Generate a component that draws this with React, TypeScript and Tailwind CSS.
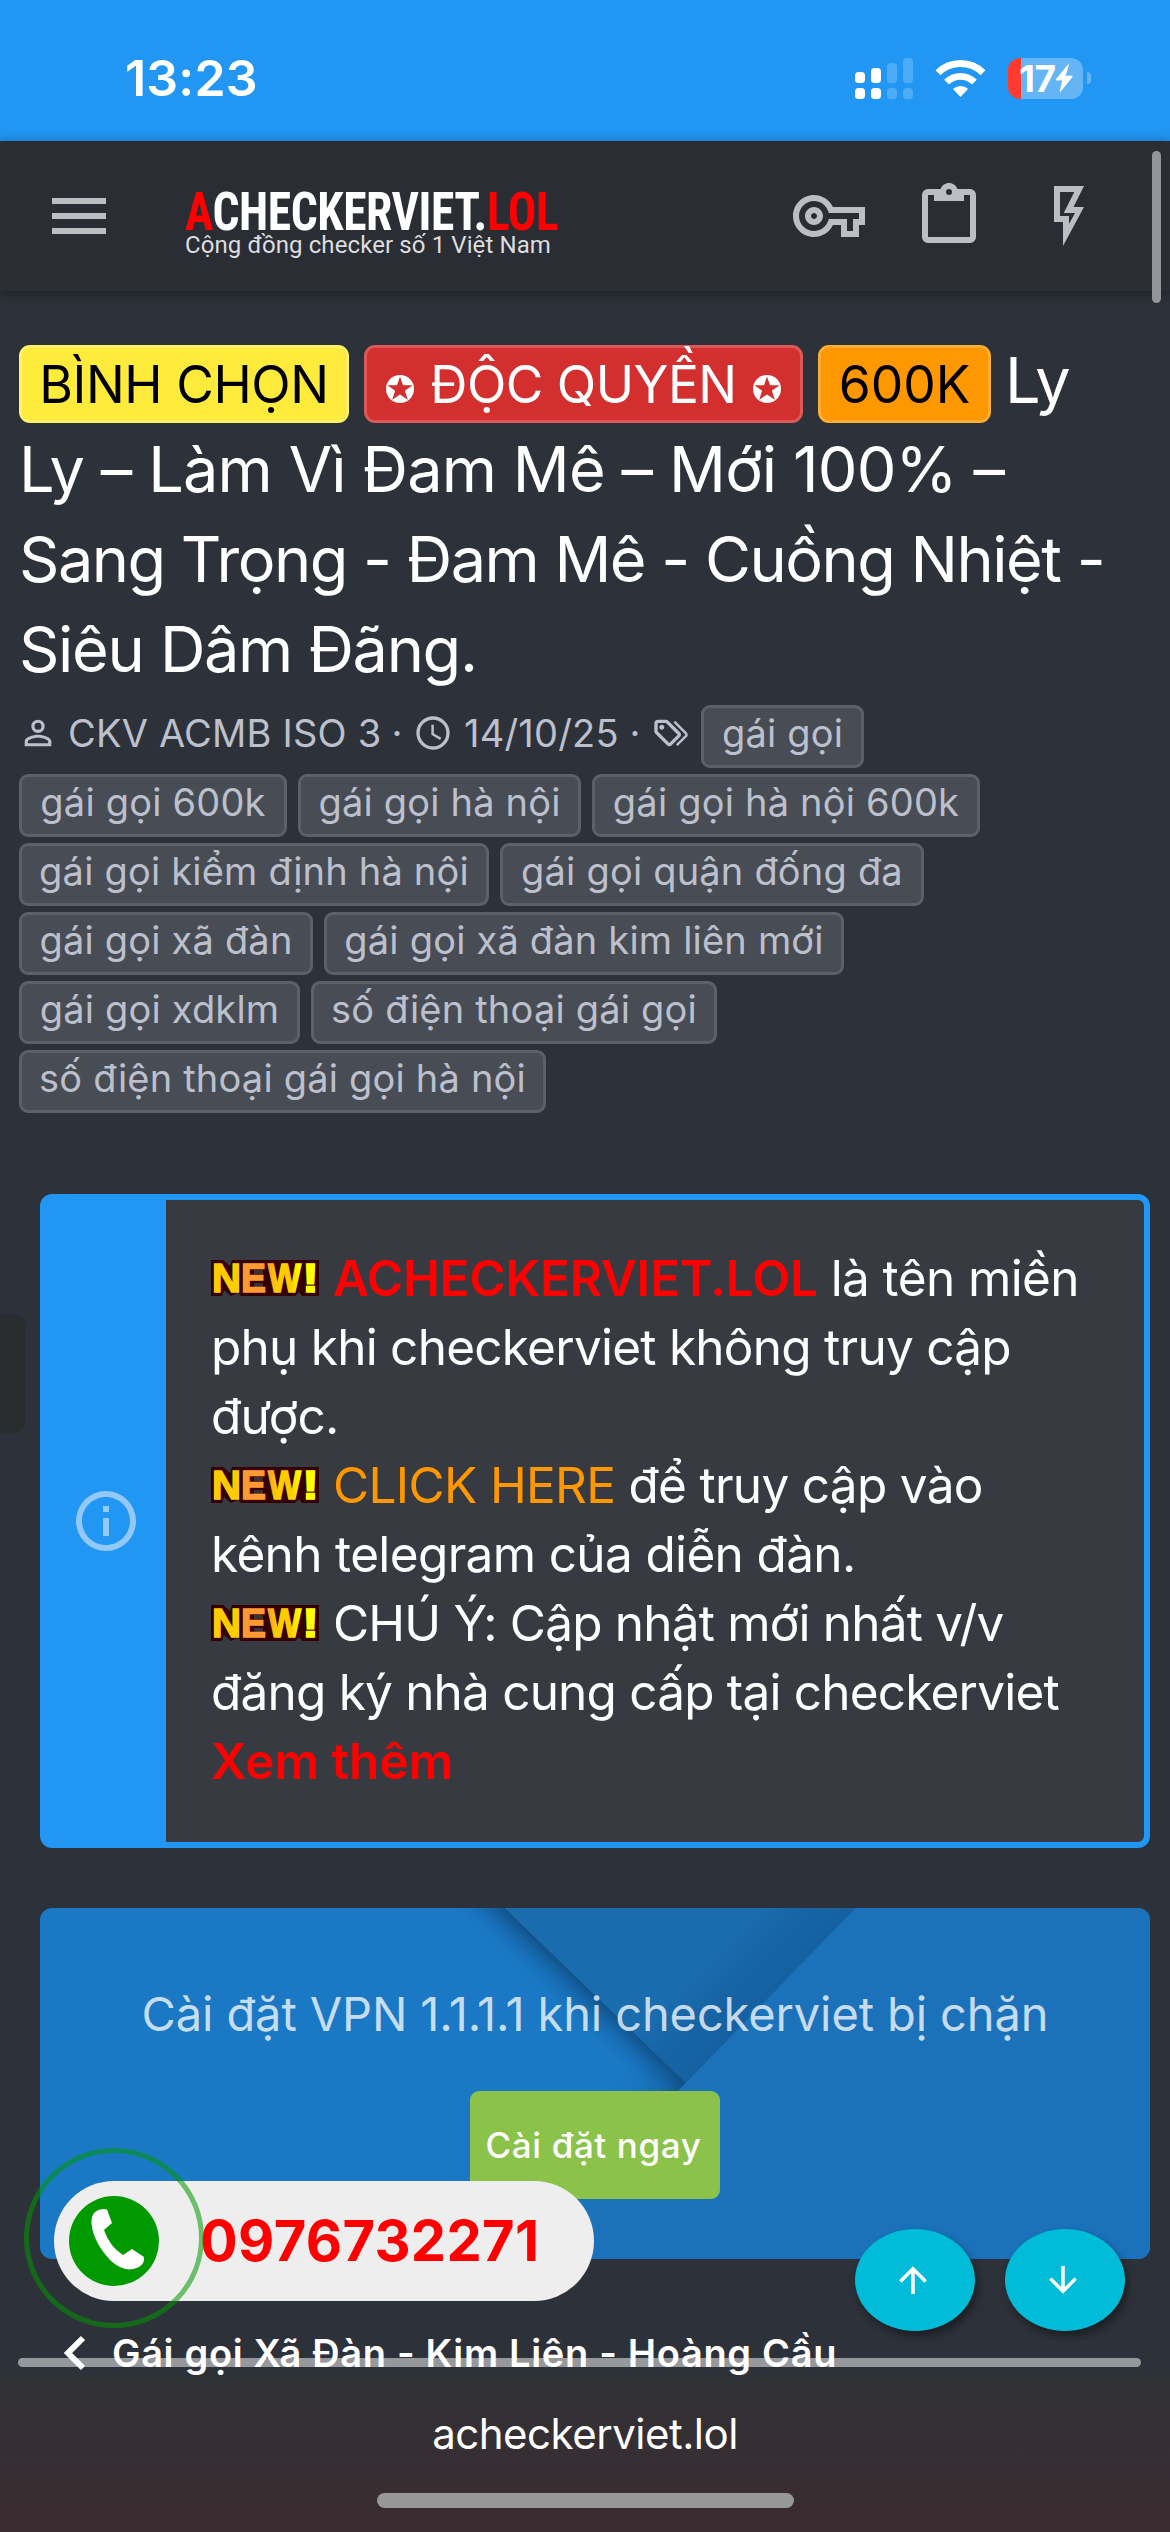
import React from "react";

const Icon = ({ d, className }: { d: string; className: string }) => (
  <svg viewBox="0 0 24 24" fill="currentColor" className={className}>
    <path d={d} />
  </svg>
);

const icons = {
  key: "M22,19H16V15H13.32C12.18,17.42 9.72,19 7,19C3.14,19 0,15.86 0,12C0,8.14 3.14,5 7,5C9.72,5 12.17,6.58 13.32,9H24V15H22V19M18,17H20V13H22V11H11.94L11.71,10.33C11,8.34 9.11,7 7,7C4.24,7 2,9.24 2,12C2,14.76 4.24,17 7,17C9.11,17 11,15.66 11.71,13.67L11.94,13H18V17M7,15C5.35,15 4,13.65 4,12C4,10.35 5.35,9 7,9C8.65,9 10,10.35 10,12C10,13.65 8.65,15 7,15M7,11C6.45,11 6,11.45 6,12C6,12.55 6.45,13 7,13C7.55,13 8,12.55 8,12C8,11.45 7.55,11 7,11Z",
  clipboard:
    "M19,3H14.82C14.4,1.84 13.3,1 12,1C10.7,1 9.6,1.84 9.18,3H5A2,2 0 0,0 3,5V19A2,2 0 0,0 5,21H19A2,2 0 0,0 21,19V5A2,2 0 0,0 19,3M12,3A1,1 0 0,1 13,4A1,1 0 0,1 12,5A1,1 0 0,1 11,4A1,1 0 0,1 12,3M7,7H17V5H19V19H5V5H7V7Z",
  flash:
    "M7,2H17L13.5,9H17L10,22V14H7V2M9,4V12H12V14.66L14,11H10.24L13.76,4H9Z",
  user: "M12,13C9.33,13 4,14.33 4,17V20H20V17C20,14.33 14.67,13 12,13M12,4A4,4 0 0,0 8,8A4,4 0 0,0 12,12A4,4 0 0,0 16,8A4,4 0 0,0 12,4M12,14.9C14.97,14.9 18.1,16.36 18.1,17V18.1H5.9V17C5.9,16.36 9,14.9 12,14.9M12,5.9A2.1,2.1 0 0,1 14.1,8A2.1,2.1 0 0,1 12,10.1A2.1,2.1 0 0,1 9.9,8A2.1,2.1 0 0,1 12,5.9Z",
  clock:
    "M12,20A8,8 0 0,0 20,12A8,8 0 0,0 12,4A8,8 0 0,0 4,12A8,8 0 0,0 12,20M12,2A10,10 0 0,1 22,12A10,10 0 0,1 12,22C6.47,22 2,17.5 2,12A10,10 0 0,1 12,2M12.5,7V12.25L17,14.92L16.25,16.15L11,13V7H12.5Z",
  tags: "M6.5 10C7.3 10 8 9.3 8 8.5S7.3 7 6.5 7 5 7.7 5 8.5 5.7 10 6.5 10M9 6L16 13L11 18L4 11V6H9M9 4H4C2.9 4 2 4.9 2 6V11C2 11.6 2.2 12.1 2.6 12.4L9.6 19.4C9.9 19.8 10.4 20 11 20S12.1 19.8 12.4 19.4L17.4 14.4C17.8 14 18 13.5 18 13C18 12.4 17.8 11.9 17.4 11.6L10.4 4.6C10.1 4.2 9.6 4 9 4M13.5 5.7L14.5 4.7L21.4 11.6C21.8 12 22 12.5 22 13S21.8 14.1 21.4 14.4L16 19.8L15 18.8L20.7 13L13.5 5.7Z",
  info: "M11,9H13V7H11M12,20C7.59,20 4,16.41 4,12C4,7.59 7.59,4 12,4C16.41,4 20,7.59 20,12C20,16.41 16.41,20 12,20M12,2A10,10 0 0,0 2,12A10,10 0 0,0 12,22A10,10 0 0,0 22,12A10,10 0 0,0 12,2M11,17H13V11H11V17Z",
  up: "M13,20H11V8L5.5,13.5L4.08,12.08L12,4.16L19.92,12.08L18.5,13.5L13,8V20Z",
  down: "M11,4H13V16L18.5,10.5L19.92,11.92L12,19.84L4.08,11.92L5.5,10.5L11,16V4Z",
};

const tagRows = [
  [
    ["gái gọi 600k", "w-[268px]"],
    ["gái gọi hà nội", "w-[283px]"],
    ["gái gọi hà nội 600k", "w-[388px]"],
  ],
  [
    ["gái gọi kiểm định hà nội", "w-[470px]"],
    ["gái gọi quận đống đa", "w-[424px]"],
  ],
  [
    ["gái gọi xã đàn", "w-[294px]"],
    ["gái gọi xã đàn kim liên mới", "w-[520px]"],
  ],
  [
    ["gái gọi xdklm", "w-[281px]"],
    ["số điện thoại gái gọi", "w-[406px]"],
  ],
  [["số điện thoại gái gọi hà nội", "w-[527px]"]],
];

const StatusBar = () => (
  <div className="flex h-[141px] items-center bg-[#2196f3] pt-[15px] pr-[79px] pl-[125px] text-white">
    <span className="text-[50px] leading-[60px] font-semibold tracking-[0.2px]">
      13:23
    </span>
    <svg viewBox="0 0 58 41" fill="currentColor" className="ml-auto h-[41px] w-[58px]">
      <rect x="0" y="14" width="10" height="11" rx="3.5" />
      <rect x="16" y="10" width="10" height="15" rx="3.5" />
      <rect x="0" y="30" width="10" height="11" rx="3.5" />
      <rect x="16" y="30" width="10" height="11" rx="3.5" />
      <g opacity="0.2">
        <rect x="32" y="5" width="10" height="20" rx="3.5" />
        <rect x="48" y="0" width="10" height="25" rx="3.5" />
        <rect x="32" y="30" width="10" height="11" rx="3.5" />
        <rect x="48" y="30" width="10" height="11" rx="3.5" />
      </g>
    </svg>
    <svg viewBox="0 0 51 37" className="ml-[22px] h-[37px] w-[51px]">
      <path d="M3 12.8a32 32 0 0 1 45 0" fill="none" stroke="#fff" strokeWidth="7" />
      <path d="M11.6 22.2a19.6 19.6 0 0 1 27.8 0" fill="none" stroke="#fff" strokeWidth="6.8" />
      <path d="M25.5 37l-7.6-8a11 11 0 0 1 15.2 0z" fill="#fff" />
    </svg>
    <div className="ml-[22px] flex h-[41px] w-[75px] items-center rounded-[12px] bg-[linear-gradient(90deg,#ff3b30_13px,#64b5f6_13px)] pl-[11px]">
      <span className="text-[37px] leading-[41px] font-bold tracking-[-0.5px]">17</span>
      <svg viewBox="0 0 18 28" fill="currentColor" className="h-[28px] w-[18px]">
        <path d="M13 .5L.8 15.2q-.6 1 .6 1.2h5.800L4.800 27q0 1.400 1 .5L17.400 13q.7-1.100-.6-1.200h-6.200L13.900 1Q14 0 13 .5z" />
      </svg>
    </div>
    <div className="ml-[4px] h-[12px] w-[4px] rounded-r-full bg-[#64b5f6]" />
  </div>
);

const Header = () => (
  <div className="relative flex h-[150px] items-center bg-[#2a2d34] pr-[65px] pl-[52px] text-[#bdbec2] shadow-[0_2px_12px_rgba(0,0,0,0.4)]">
    <div className="flex w-[54px] flex-col gap-[9px]">
      <div className="h-[6px] bg-current" />
      <div className="h-[6px] bg-current" />
      <div className="h-[6px] bg-current" />
    </div>
    <div className="ml-[79px] flex w-[366px] flex-col items-start pt-[15px]">
      <div className="origin-left scale-x-[0.88] font-['Roboto_Condensed'] text-[54px] leading-[42px] font-bold tracking-[-0.5px] whitespace-nowrap text-[#ff0000]">
        A<span className="text-white">CHECKERVIET.</span>LOL
      </div>
      <div className="font-['Roboto'] text-[24px] leading-[24px] tracking-[0.1px] whitespace-nowrap text-[#dcdddf]">
        Cộng đồng checker số 1 Việt Nam
      </div>
    </div>
    <div className="ml-auto flex gap-[48px]">
      <Icon d={icons.key} className="size-[72px]" />
      <Icon d={icons.clipboard} className="size-[72px]" />
      <Icon d={icons.flash} className="size-[72px]" />
    </div>
    <div className="absolute top-[10px] right-[9px] h-[152px] w-[9px] rounded-full bg-[#949599]" />
  </div>
);

const Star = () => (
  <svg viewBox="0 0 28 28" className="size-[28px]">
    <circle cx="14" cy="14" r="14" fill="#fff" />
    <path
      d="M14 1.500l3 8.800h9.500l-7.600 5.500 2.900 9L14 19.400l-7.800 5.400 2.900-9L1.500 10.300H11z"
      fill="#d32f2f"
    />
  </svg>
);

const Title = () => (
  <h1 className="text-[63px] leading-[90px] whitespace-nowrap text-white">
    <div className="flex h-[78px] items-baseline">
      <span className="h-[78px] w-[330px] rounded-[11px] border-3 border-[#fff06a] bg-[#ffeb3b] text-center text-[51.5px] leading-[72px] tracking-[-0.42px] text-black">
        BÌNH CHỌN
      </span>
      <span className="ml-[15px] flex h-[78px] w-[439px] items-baseline justify-center gap-[16px] rounded-[11px] border-3 border-[#db5858] bg-[#d32f2f] text-[51.5px] leading-[72px] tracking-[-0.53px]">
        <Star />
        <span>ĐỘC QUYỀN</span>
        <Star />
      </span>
      <span className="ml-[15px] h-[78px] w-[173px] rounded-[11px] border-3 border-[#ffad33] bg-[#ff9800] text-center text-[51.5px] leading-[72px] text-black">
        600K
      </span>
      <span className="ml-[14px] leading-[68px] tracking-[-1px]">Ly</span>
    </div>
    <div className="mt-px tracking-[-0.87px]">Ly – Làm Vì Đam Mê – Mới 100% –</div>
    <div className="tracking-[-1.5px]">Sang Trọng - Đam Mê - Cuồng Nhiệt -</div>
    <div className="tracking-[-1.3px]">Siêu Dâm Đãng.</div>
  </h1>
);

const Tag = ({ label, width }: { label: string; width: string }) => (
  <span
    className={`flex h-[63px] shrink-0 items-center justify-center rounded-[9px] border-3 border-[#5c6068] bg-[#484c55] pb-[7px] whitespace-nowrap ${width}`}
  >
    {label}
  </span>
);

const Meta = () => (
  <div className="mt-[11px] flex flex-col gap-[6px] text-[38px] tracking-[0.2px] text-[#bbc0cc]">
    <div className="-ml-px flex h-[63px] items-center whitespace-nowrap">
      <div className="flex items-center pb-[7px]">
        <Icon d={icons.user} className="size-[40px]" />
        <span className="ml-[10px] w-[322px]">CKV ACMB ISO 3</span>
        <span className="w-[14px] text-center">·</span>
        <Icon d={icons.clock} className="ml-[9px] size-[40px]" />
        <span className="ml-[11px] w-[164px]">14/10/25</span>
        <span className="w-[14px] text-center">·</span>
        <Icon d={icons.tags} className="mr-[10px] ml-[9px] size-[40px]" />
      </div>
      <Tag label="gái gọi" width="w-[163px]" />
    </div>
    {tagRows.map((row, i) => (
      <div key={i} className="flex gap-[11px]">
        {row.map(([label, width]) => (
          <Tag key={label} label={label} width={width} />
        ))}
      </div>
    ))}
  </div>
);

const New = () => (
  <svg
    viewBox="0 0 108 36"
    className="mr-[14px] inline h-[36px] w-[108px] overflow-visible align-baseline font-['Liberation_Sans'] text-[40px] font-bold"
  >
    <defs>
      <linearGradient id="newW" x1="0" x2="1">
        <stop offset="0" stopColor="#ff9933" />
        <stop offset="0.25" stopColor="#ffcc00" />
        <stop offset="0.7" stopColor="#ffcc00" />
        <stop offset="0.95" stopColor="#ffff00" />
      </linearGradient>
    </defs>
    <path d="M0 0h12l7 6 2-6h87v36H91l-3-4-4 4H30l-3-3-7 3-7-6-2 6H0z" fill="#350000" />
    <path d="M43 10h9v4h-9zM43 23h9v4h-9z" fill="#3b3238" />
    <g strokeWidth="1.5">
      <text x="1" y="32" textLength="29" lengthAdjust="spacingAndGlyphs" fill="#ffcc00" stroke="#ffcc00">N</text>
      <text x="30" y="32" textLength="25" lengthAdjust="spacingAndGlyphs" fill="#ff9933" stroke="#ff9933">E</text>
      <text x="57" y="32" textLength="33" lengthAdjust="spacingAndGlyphs" fill="url(#newW)" stroke="url(#newW)">W</text>
      <text x="91" y="32" textLength="17" lengthAdjust="spacingAndGlyphs" fill="#ffff00" stroke="#ffff00">!</text>
    </g>
  </svg>
);

const Notice = () => (
  <div className="mt-[81px] ml-[21px] flex h-[654px] w-[1110px] rounded-[12px] border-6 border-[#2196f3] bg-[#383a42]">
    <div className="flex w-[120px] items-center justify-center bg-[#2196f3] text-[#93c9fa]">
      <Icon d={icons.info} className="size-[72px]" />
    </div>
    <div className="pt-[44px] pl-[45px] text-[49.5px] leading-[69px] whitespace-nowrap text-white *:h-[69px]">
      <div>
        <New />
        <b className="font-semibold tracking-[-0.28px] text-[#ff0000]">ACHECKERVIET.LOL</b>
        <span className="ml-[13px] tracking-[-0.6px]">là tên miền</span>
      </div>
      <div className="tracking-[-0.75px]">phụ khi checkerviet không truy cập</div>
      <div className="tracking-[-0.75px]">được.</div>
      <div>
        <New />
        <span className="tracking-[-0.65px] text-[#ff9800]">CLICK HERE</span>
        <span className="ml-[13px] tracking-[-0.7px]">để truy cập vào</span>
      </div>
      <div className="tracking-[-0.65px]">kênh telegram của diễn đàn.</div>
      <div>
        <New />
        <span className="tracking-[-0.8px]">CHÚ Ý: Cập nhật mới nhất v/v</span>
      </div>
      <div className="tracking-[-0.8px]">đăng ký nhà cung cấp tại checkerviet</div>
      <div className="font-semibold text-[#ff0000]">Xem thêm</div>
    </div>
  </div>
);

const Promo = () => (
  <div className="relative mt-[60px] ml-[21px] flex h-[351px] w-[1110px] flex-col items-center overflow-hidden rounded-[12px] bg-[#1a78c4] pt-[76px]">
    {/* folded paper backdrop */}
    <svg viewBox="0 0 1110 351" className="absolute inset-0 h-full w-full">
      <defs>
        <linearGradient id="fold" gradientUnits="userSpaceOnUse" x1="556" y1="88" x2="530" y2="115">
          <stop offset="0" stopColor="#0d4677" stopOpacity="0.75" />
          <stop offset="0.4" stopColor="#0f5089" stopOpacity="0.35" />
          <stop offset="1" stopColor="#1a78c4" stopOpacity="0" />
        </linearGradient>
        <linearGradient id="edge" gradientUnits="userSpaceOnUse" x1="731" y1="88" x2="683" y2="41">
          <stop offset="0" stopColor="#1560a0" />
          <stop offset="0.6" stopColor="#1765a6" />
          <stop offset="1" stopColor="#196cae" />
        </linearGradient>
        <linearGradient id="under" gradientUnits="userSpaceOnUse" x1="646" y1="175" x2="606" y2="135">
          <stop offset="0" stopColor="#155c98" stopOpacity="0.7" />
          <stop offset="1" stopColor="#1a78c4" stopOpacity="0" />
        </linearGradient>
      </defs>
      <path d="M400 0H465L646 175L471 351H300z" fill="url(#under)" />
      <path d="M400 0H465L646 175L620 201H500z" fill="url(#fold)" />
      <path d="M465 0H816L646 175z" fill="url(#edge)" />
      <path d="M816 0H1110V351H471L646 175z" fill="#1b72bb" />
    </svg>
    <div className="relative text-[47px] leading-[60px] tracking-[-0.12px] whitespace-nowrap text-white/75">
      Cài đặt VPN 1.1.1.1 khi checkerviet bị chặn
    </div>
    <button className="relative mt-[47px] h-[108px] w-[250px] rounded-[9px] bg-[#8bc34a] pr-[3px] text-[35px] font-medium tracking-[0.6px] whitespace-nowrap text-white">
      Cài đặt ngay
    </button>
  </div>
);

const Hotline = () => (
  <div className="absolute top-[2181px] left-[54px] flex h-[120px] w-[540px] items-center rounded-full bg-[#eeeeee] pl-[15px]">
    <svg viewBox="0 0 90 90" className="size-[90px]">
      <circle cx="45" cy="45" r="45" fill="#009900" />
      <path
        d="M26 16Q31 12 38 13.5L43 27 35 34Q41 51 54 59L63 53 75 61Q76 67 70 71 57 78 42 65 24 46 22.5 27 22 20 26 16Z"
        fill="#fff"
      />
    </svg>
    <span className="ml-[41px] text-[56px] font-bold tracking-[0.33px] text-[#ff0000]">
      0976732271
    </span>
    <div className="absolute -top-[33px] -left-[30px] size-[180px] rounded-full border-[5px] border-[#009600]/55" />
  </div>
);

const App = () => {
  return (
    <div className="relative h-[2532px] w-[1170px] overflow-hidden bg-[#2d3139] font-['Inter',sans-serif]">
      <StatusBar />
      <Header />
      <div className="h-[2085px] pt-[54px] pl-[19px]">
        <Title />
        <Meta />
        <Notice />
        <Promo />
        <div className="mt-[70px] flex h-[48px] items-center pl-[45px] text-[38px] font-semibold tracking-[0.67px] whitespace-nowrap text-white">
          <svg viewBox="0 0 22 36" className="h-[36px] w-[22px]">
            <path d="M19 3L4 18l15 15" fill="none" stroke="#fff" strokeWidth="6" />
          </svg>
          <span className="ml-[26px]">Gái gọi Xã Đàn - Kim Liên - Hoàng Cầu</span>
        </div>
      </div>
      <div className="flex h-[156px] flex-col items-center bg-linear-to-b from-[#303236] to-[#3a2b30] pt-[28px]">
        <span className="text-[42px] leading-[60px] tracking-[-0.49px] text-white">
          acheckerviet.lol
        </span>
        <div className="mt-[29px] h-[15px] w-[417px] rounded-full bg-[#979797]" />
      </div>

      {/* overlays */}
      <div className="absolute top-[1314px] left-0 h-[120px] w-[25px] rounded-r-[12px] bg-[#2a2d30]" />
      <div className="absolute top-[2358px] left-[18px] h-[9px] w-[1123px] rounded-full bg-white/50" />
      <Hotline />
      <div className="absolute top-[2229px] left-[855px] flex gap-[30px] text-white">
        <button className="flex h-[102px] w-[120px] items-center justify-center rounded-[50%] bg-[#00bcd8] pr-[4px] shadow-[3px_5px_8px_rgba(0,0,0,0.4)]">
          <Icon d={icons.up} className="size-[42px]" />
        </button>
        <button className="flex h-[102px] w-[120px] items-center justify-center rounded-[50%] bg-[#00bcd8] pr-[4px] shadow-[3px_5px_8px_rgba(0,0,0,0.4)]">
          <Icon d={icons.down} className="size-[42px]" />
        </button>
      </div>
    </div>
  );
};

export default App;
